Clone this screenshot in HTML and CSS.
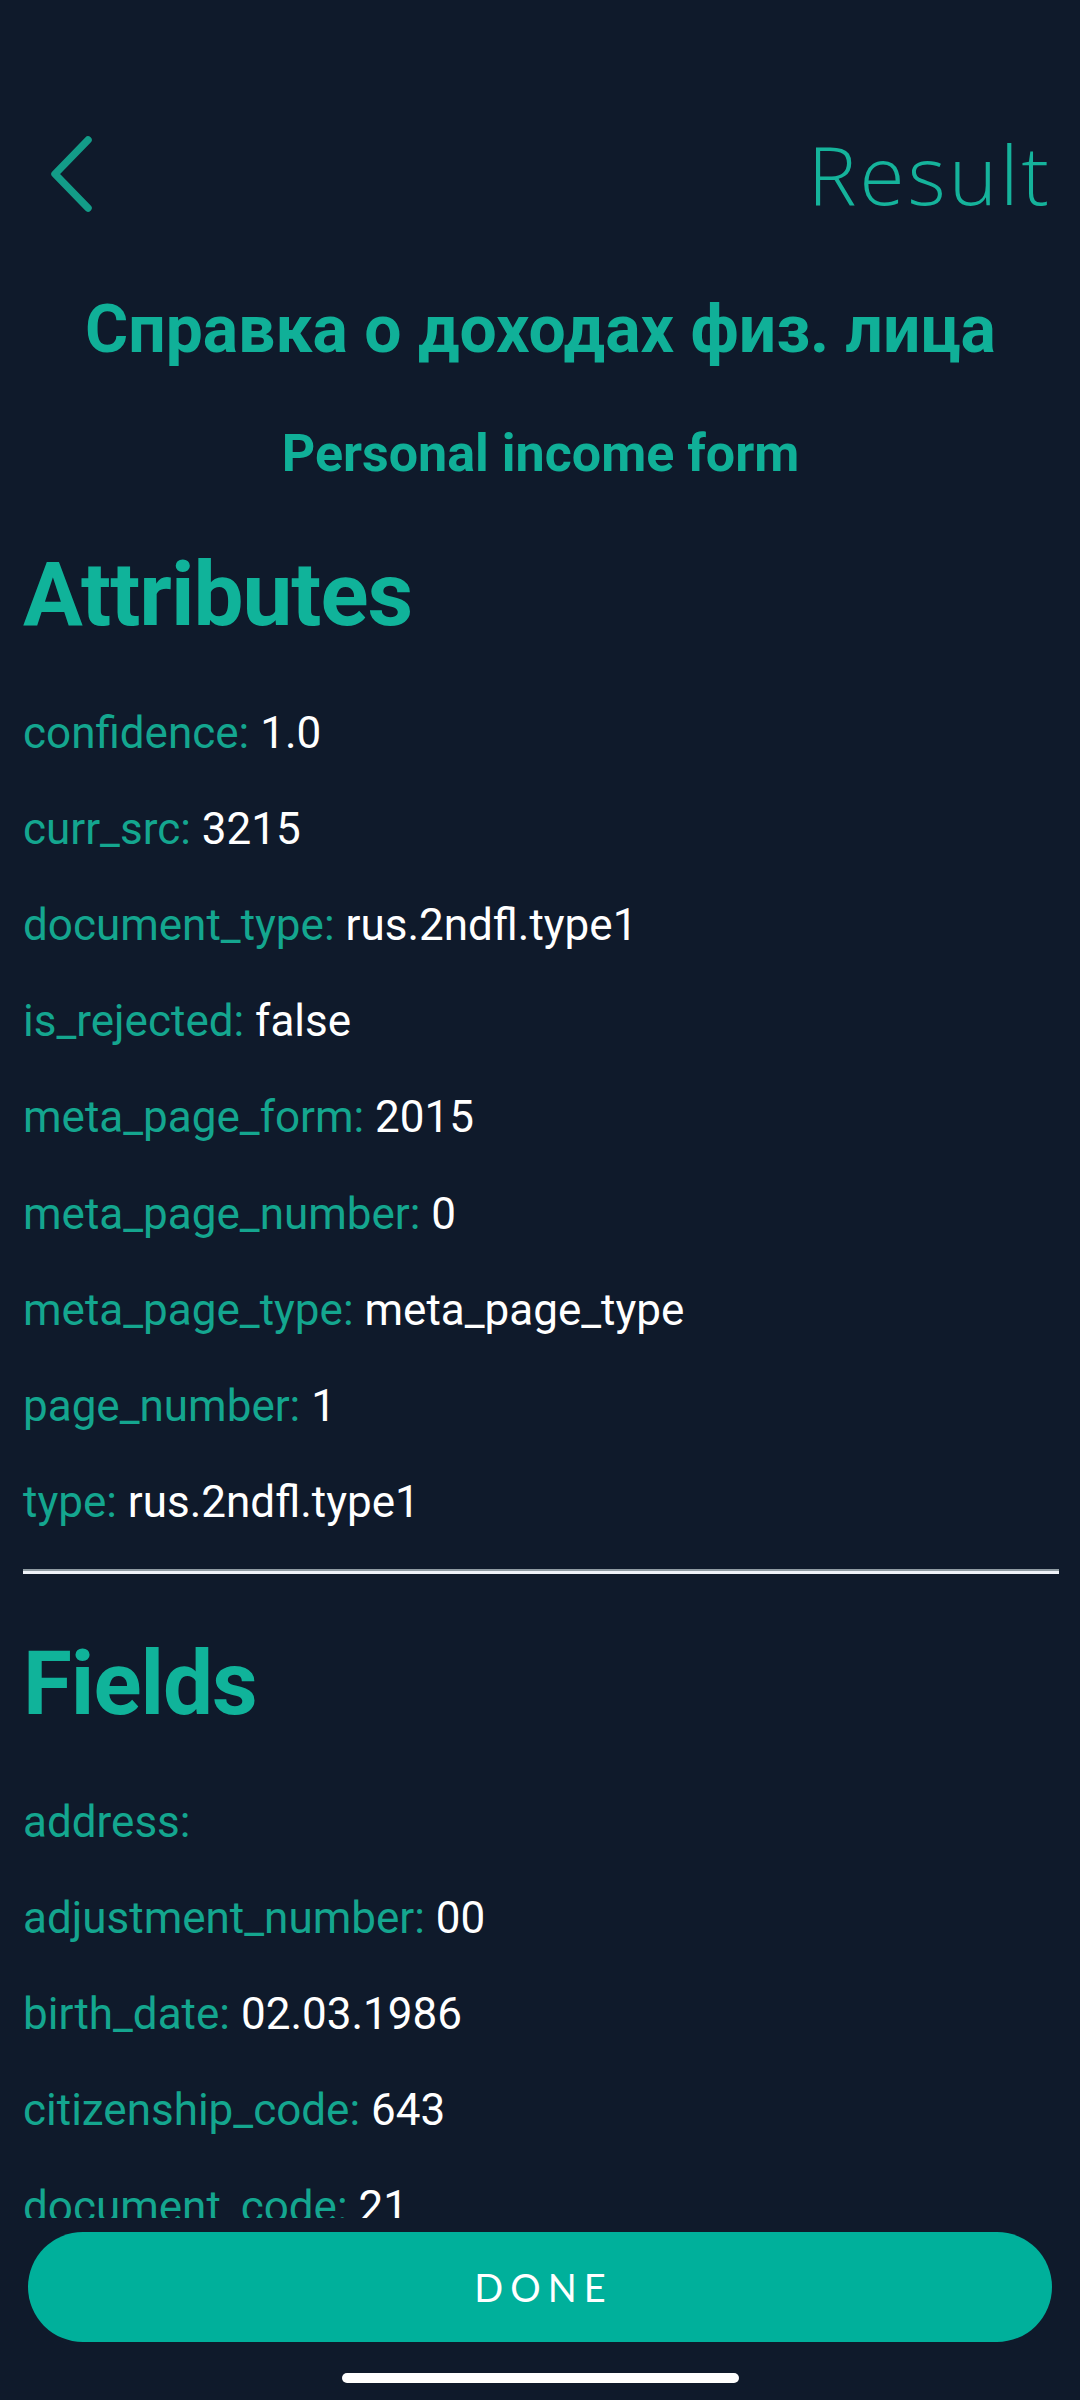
FILE: index.html
```html
<!DOCTYPE html>
<html lang="ru">
<head>
<meta charset="utf-8">
<title>Result</title>
<link rel="stylesheet" href="styles.css">
</head>
<body>
<div class="screen">
  <div class="scroll">
    <header class="topbar">
      <svg class="back" width="41" height="76" viewBox="0 0 41 76" aria-hidden="true">
        <path d="M37 4 L4 38 L37 72" fill="none" stroke="#139c88" stroke-width="7.5" stroke-linecap="round" stroke-linejoin="round"/>
      </svg>
      <div class="screen-title">Result</div>
    </header>
    <h1 class="doc-title">Справка о доходах физ. лица</h1>
    <h2 class="doc-subtitle">Personal income form</h2>

    <section class="section">
      <h3 class="section-title">Attributes</h3>
      <ul class="kv">
        <li><span class="k">confidence:</span> <span class="v">1.0</span></li>
        <li><span class="k">curr_src:</span> <span class="v">3215</span></li>
        <li><span class="k">document_type:</span> <span class="v">rus.2ndfl.type1</span></li>
        <li><span class="k">is_rejected:</span> <span class="v">false</span></li>
        <li><span class="k">meta_page_form:</span> <span class="v">2015</span></li>
        <li><span class="k">meta_page_number:</span> <span class="v">0</span></li>
        <li><span class="k">meta_page_type:</span> <span class="v">meta_page_type</span></li>
        <li><span class="k">page_number:</span> <span class="v">1</span></li>
        <li><span class="k">type:</span> <span class="v">rus.2ndfl.type1</span></li>
      </ul>
    </section>

    <div class="divider"></div>

    <section class="section">
      <h3 class="section-title fields">Fields</h3>
      <ul class="kv">
        <li><span class="k">address:</span></li>
        <li><span class="k">adjustment_number:</span> <span class="v">00</span></li>
        <li><span class="k">birth_date:</span> <span class="v">02.03.1986</span></li>
        <li><span class="k">citizenship_code:</span> <span class="v">643</span></li>
        <li><span class="k">document_code:</span> <span class="v">21</span></li>
      </ul>
    </section>
  </div>

  <button class="done" type="button">DONE</button>
  <div class="home-indicator"></div>
</div>
</body>
</html>
```

FILE: styles.css
```css
* {
  box-sizing: border-box;
}

html, body {
  margin: 0;
  padding: 0;
  background: #0f1a2b;
}

body {
  width: 1080px;
  height: 2400px;
  overflow: hidden;
  font-family: Roboto, "Noto Sans", "Liberation Sans", sans-serif;
}

.screen {
  width: 1080px;
  height: 2400px;
  display: flex;
  flex-direction: column;
  background: #0f1a2b;
}

.scroll {
  height: 2218px;
  flex: 0 0 2218px;
  overflow: hidden;
  padding: 0 22px 0 23px;
}

.topbar {
  display: flex;
  justify-content: space-between;
  align-items: flex-start;
  padding-top: 132px;
  height: 214px;
}

.back {
  display: block;
  margin-top: 4px;
  margin-left: 28px;
}

.screen-title {
  font-family: "Open Sans", "Noto Sans", sans-serif;
  font-weight: 300;
  font-size: 82px;
  line-height: 82px;
  letter-spacing: 3px;
  color: #15b39b;
  margin-right: 6px;
}

.doc-title {
  margin: 76px 0 0;
  text-align: center;
  font-weight: 700;
  font-size: 66px;
  line-height: 80px;
  color: #10b098;
}

.doc-subtitle {
  margin: 49px 0 0;
  text-align: center;
  font-weight: 700;
  font-size: 52px;
  line-height: 70px;
  color: #10b098;
}

.section-title {
  margin: 56px 0 0;
  font-weight: 700;
  font-size: 89px;
  line-height: 100px;
  color: #10b39a;
  letter-spacing: -1px;
}

.section-title.fields {
  margin-top: 60px;
}

.kv {
  list-style: none;
  margin: 39.5px 0 0;
  padding: 0;
}

.kv li {
  font-size: 44px;
  line-height: 96.2px;
  white-space: nowrap;
}

.k {
  color: #14a68f;
}

.v {
  color: #ffffff;
}

.divider {
  margin-top: 19px;
  height: 5px;
  border-top: 2px solid #8f9ba2;
  border-bottom: 3px solid #eef2f8;
  margin-right: -1px;
}

.done {
  flex: 0 0 110px;
  height: 110px;
  margin: 14px 28px 0;
  border: none;
  border-radius: 55px;
  background: #00b09b;
  color: #ffffff;
  font-family: Lato, "Open Sans", sans-serif;
  font-weight: 400;
  font-size: 38px;
  letter-spacing: 7px;
  padding: 0 0 0 7px;
  text-align: center;
}

.home-indicator {
  width: 397px;
  height: 10px;
  margin: 31px auto 0;
  border-radius: 5px;
  background: #ffffff;
}
```
